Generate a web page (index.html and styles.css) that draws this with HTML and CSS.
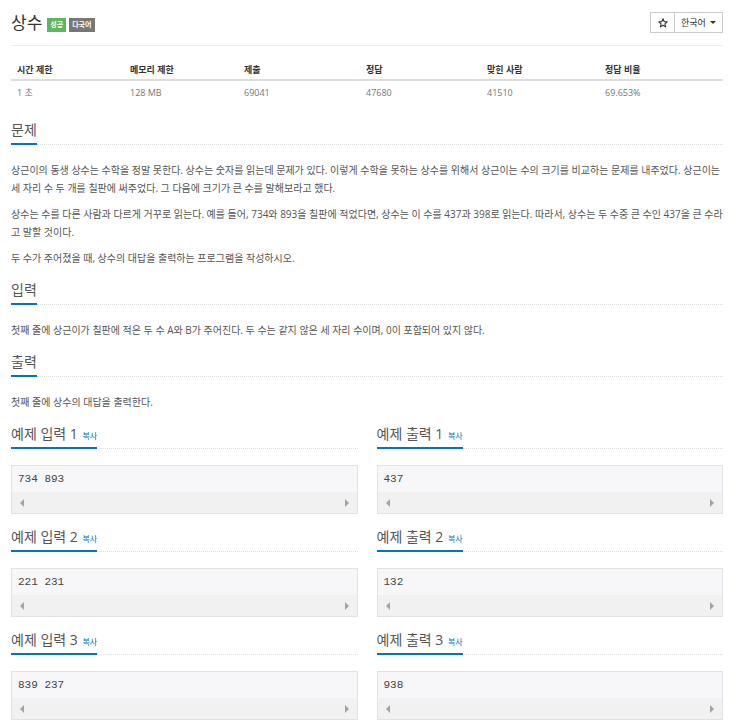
FILE: index.html
```html
<!DOCTYPE html>
<html lang="ko">
<head>
<meta charset="utf-8">
<title>상수</title>
<link rel="stylesheet" href="styles.css">
</head>
<body>
<div class="page">
  <header class="title-bar">
    <div class="title">
      <h1>상수</h1>
      <span class="badge ok">성공</span>
      <span class="badge lang">다국어</span>
    </div>
    <div class="btn-group">
      <button class="btn star"><svg width="10" height="10" viewBox="0 0 10 10"><polygon points="5,0.8 6.2,3.6 9.2,3.8 6.9,5.8 7.6,8.9 5,7.3 2.4,8.9 3.1,5.8 0.8,3.8 3.8,3.6" fill="none" stroke="#333" stroke-width="1.1" stroke-linejoin="round"/></svg></button>
      <button class="btn dropdown">한국어 <span class="caret"></span></button>
    </div>
  </header>

  <table class="info">
    <colgroup>
      <col class="c1"><col class="c2"><col class="c3"><col class="c4"><col class="c5"><col class="c6">
    </colgroup>
    <thead>
      <tr><th>시간 제한</th><th>메모리 제한</th><th>제출</th><th>정답</th><th>맞힌 사람</th><th>정답 비율</th></tr>
    </thead>
    <tbody>
      <tr><td>1 초</td><td>128 MB</td><td>69041</td><td>47680</td><td>41510</td><td>69.653%</td></tr>
    </tbody>
  </table>

  <section class="section">
    <div class="headline"><h2>문제</h2></div>
    <div class="text">
      <p>상근이의 동생 상수는 수학을 정말 못한다. 상수는 숫자를 읽는데 문제가 있다. 이렇게 수학을 못하는 상수를 위해서 상근이는 수의 크기를 비교하는 문제를 내주었다. 상근이는 세 자리 수 두 개를 칠판에 써주었다. 그 다음에 크기가 큰 수를 말해보라고 했다.</p>
      <p>상수는 수를 다른 사람과 다르게 거꾸로 읽는다. 예를 들어, 734와 893을 칠판에 적었다면, 상수는 이 수를 437과 398로 읽는다. 따라서, 상수는 두 수중 큰 수인 437을 큰 수라고 말할 것이다.</p>
      <p>두 수가 주어졌을 때, 상수의 대답을 출력하는 프로그램을 작성하시오.</p>
    </div>
  </section>

  <section class="section">
    <div class="headline"><h2>입력</h2></div>
    <div class="text">
      <p>첫째 줄에 상근이가 칠판에 적은 두 수 A와 B가 주어진다. 두 수는 같지 않은 세 자리 수이며, 0이 포함되어 있지 않다.</p>
    </div>
  </section>

  <section class="section">
    <div class="headline"><h2>출력</h2></div>
    <div class="text">
      <p>첫째 줄에 상수의 대답을 출력한다.</p>
    </div>
  </section>

  <div class="samples">
    <section class="sample">
      <div class="headline"><h2>예제 입력 1 <a class="copy">복사</a></h2></div>
      <div class="pre-box"><pre>734 893</pre><div class="scrollbar"><span class="arr left"></span><span class="arr right"></span></div></div>
    </section>
    <section class="sample">
      <div class="headline"><h2>예제 출력 1 <a class="copy">복사</a></h2></div>
      <div class="pre-box"><pre>437</pre><div class="scrollbar"><span class="arr left"></span><span class="arr right"></span></div></div>
    </section>
    <section class="sample">
      <div class="headline"><h2>예제 입력 2 <a class="copy">복사</a></h2></div>
      <div class="pre-box"><pre>221 231</pre><div class="scrollbar"><span class="arr left"></span><span class="arr right"></span></div></div>
    </section>
    <section class="sample">
      <div class="headline"><h2>예제 출력 2 <a class="copy">복사</a></h2></div>
      <div class="pre-box"><pre>132</pre><div class="scrollbar"><span class="arr left"></span><span class="arr right"></span></div></div>
    </section>
    <section class="sample">
      <div class="headline"><h2>예제 입력 3 <a class="copy">복사</a></h2></div>
      <div class="pre-box"><pre>839 237</pre><div class="scrollbar"><span class="arr left"></span><span class="arr right"></span></div></div>
    </section>
    <section class="sample">
      <div class="headline"><h2>예제 출력 3 <a class="copy">복사</a></h2></div>
      <div class="pre-box"><pre>938</pre><div class="scrollbar"><span class="arr left"></span><span class="arr right"></span></div></div>
    </section>
  </div>
</div>
</body>
</html>
```
FILE: styles.css
```css
body {
  margin: 0;
  background: #fff;
  color: #555;
  font-family: "Open Sans", "Noto Sans CJK KR", sans-serif;
}

.page {
  padding: 0 17px 0 11px;
}

.title-bar {
  height: 45px;
  display: flex;
  align-items: center;
  justify-content: space-between;
  border-bottom: 1px solid #eee;
}

.title {
  display: flex;
  align-items: center;
}

.title h1 {
  margin: 0;
  font-size: 17px;
  font-weight: normal;
  line-height: 24px;
  color: #333;
}

.badge {
  display: inline-block;
  height: 14px;
  line-height: 14px;
  padding: 0 3px;
  margin-top: 5px;
  font-size: 7px;
  font-weight: bold;
  color: #fff;
}

.badge.ok {
  background: #5cb85c;
  margin-left: 5px;
}

.badge.lang {
  background: #777;
  margin-left: 3px;
}

.btn-group {
  display: flex;
}

.btn {
  height: 21px;
  border: 1px solid #ccc;
  background: #fff;
  color: #333;
  font-family: "Open Sans", "Noto Sans CJK KR", sans-serif;
  font-size: 9px;
  padding: 0 6px;
  margin: 0;
  display: flex;
  align-items: center;
  white-space: nowrap;
}

.btn.star {
  width: 25px;
  justify-content: center;
  padding: 0;
}

.btn.dropdown {
  width: 49px;
  margin-left: -1px;
  justify-content: space-between;
}

.caret {
  width: 0;
  height: 0;
  border-top: 3px solid #333;
  border-left: 3px solid transparent;
  border-right: 3px solid transparent;
}

.info {
  width: 100%;
  margin-top: 13px;
  border-collapse: collapse;
  font-size: 9px;
  table-layout: fixed;
}

.info .c1 { width: 113px; }
.info .c2 { width: 114px; }
.info .c3 { width: 122px; }
.info .c4 { width: 121px; }
.info .c5 { width: 118px; }

.info th {
  height: 20px;
  padding: 0 6px;
  text-align: left;
  color: #333;
  font-weight: bold;
  border-bottom: 2px solid #ddd;
}

.info td {
  height: 22px;
  padding: 0 6px;
  color: #777;
}

.section {
  margin-top: 17px;
}

.section + .section {
  margin-top: 13px;
}

.headline {
  display: flex;
  align-items: flex-end;
}

.headline::after {
  content: "";
  flex: 1;
  border-bottom: 1px dotted #ddd;
}

.headline h2 {
  margin: 0;
  height: 20px;
  font-size: 14px;
  line-height: 20px;
  font-weight: normal;
  color: #555;
  padding-bottom: 3px;
  border-bottom: 2px solid #0076c0;
  white-space: nowrap;
}

.copy {
  font-size: 8px;
  line-height: 1;
  color: #0076c0;
  margin-left: 1px;
}

.text {
  margin-top: 16px;
  font-size: 10px;
  line-height: 18px;
}

.text p {
  margin: 0 0 8px;
}

.text p:last-child {
  margin-bottom: 0;
}

.samples {
  display: grid;
  grid-template-columns: 1fr 1fr;
  column-gap: 19px;
  row-gap: 13px;
  margin-top: 13px;
}

.pre-box {
  margin-top: 16px;
  border: 1px solid #e1e1e8;
  background: #f7f7f9;
}

.pre-box pre {
  margin: 0;
  height: 26px;
  padding: 0 6px;
  font-family: "Liberation Mono", monospace;
  font-size: 11px;
  line-height: 26px;
  color: #444;
}

.scrollbar {
  height: 21px;
  background: #f1f1f1;
  display: flex;
  align-items: center;
  justify-content: space-between;
  padding: 0 8px;
}

.arr {
  width: 0;
  height: 0;
  border-top: 4px solid transparent;
  border-bottom: 4px solid transparent;
}

.arr.left {
  border-right: 4px solid #a3a3a3;
}

.arr.right {
  border-left: 4px solid #a3a3a3;
}
```
